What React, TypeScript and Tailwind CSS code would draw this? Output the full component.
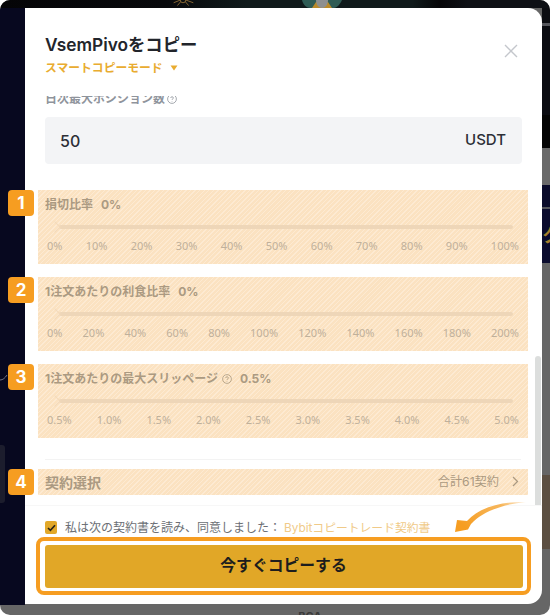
import React from "react";

const FONT = "[font-family:Inter,'Noto_Sans_CJK_JP',sans-serif]";

function Ticks({ items }: { items: string[] }) {
  return (
    <div className="mt-[10px] flex justify-between pl-[9px] pr-[9px] text-[11px] leading-[14px] text-[#bfb09b] [font-family:'Noto_Sans','Noto_Sans_CJK_JP',sans-serif]">
      {items.map((t) => (
        <span key={t}>{t}</span>
      ))}
    </div>
  );
}

function Help({ color }: { color: string }) {
  return (
    <svg width="10" height="10" viewBox="0 0 10 10" fill="none" stroke={color} strokeWidth="0.8">
      <circle cx="5" cy="5" r="4.4" />
      <path d="M3.7 4c0-1.7 2.7-1.7 2.7 0 0 .9-1.4 1-1.4 1.9M5 7.1v.5" />
    </svg>
  );
}

function Badge({ n }: { n: number }) {
  return (
    <div className="absolute left-[-30px] top-0 flex h-[26px] w-[26px] items-center justify-center rounded-[4px] bg-[#f69d21] text-[17px] font-bold leading-none text-white">
      {n}
    </div>
  );
}

const HATCH =
  "bg-[repeating-linear-gradient(135deg,#fbe2c1_0px,#fbe2c1_2.2px,#fdead2_2.2px,#fdead2_3.2px)]";

function Section({
  n,
  title,
  value,
  help,
  ticks,
}: {
  n: number;
  title: string;
  value: string;
  help?: boolean;
  ticks: string[];
}) {
  return (
    <div className={`relative ml-[13px] h-[74px] w-[490px] ${HATCH}`}>
      <Badge n={n} />
      <div className="flex items-center pl-[7px] pt-[7px] text-[12px] font-bold leading-[16px] text-[#ab9a82]">
        <span>{title}</span>
        {help && (
          <span className="ml-[4px] flex">
            <Help color="#ab9a82" />
          </span>
        )}
        <span className="ml-[8px]">{value}</span>
      </div>
      <div className="relative ml-[21px] mr-[15px] mt-[12px] h-[4px] rounded-full bg-[#eed6b8]">
        <div className="absolute left-[-8px] top-[-2px] h-[8px] w-[8px] rotate-45 border-r border-t border-[#f3d9ba]" />
      </div>
      <Ticks items={ticks} />
    </div>
  );
}

export default function App() {
  return (
    <div className={`relative h-[615px] w-[550px] overflow-hidden bg-white ${FONT}`}>
      {/* Dimmed page behind the dialog */}
      <div className="flex h-full flex-col overflow-hidden rounded-[10px] bg-[#666666]">
        <div className="relative h-[8px] shrink-0 bg-[linear-gradient(90deg,#050507_0%,#08090c_30%,#101a1b_45%,#101a1b_75%,#060608_80%,#0e1015_85%)]">
          <svg className="absolute left-[168px] top-[-9px]" width="30" height="16" viewBox="0 0 32 16" fill="none" stroke="#8a6a35" strokeWidth="1">
            <path d="M16 8 4 3M16 8 6 12M16 8 28 3M16 8 27 12M16 8 10 15M16 8 22 15" />
            <circle cx="16" cy="9" r="3" fill="#0b0f10" />
          </svg>
          <svg className="absolute left-[300px] top-0" width="44" height="8" viewBox="0 0 44 8">
            <path d="M2 0h40c-2 5-6 8-8 8H10C7 8 3 5 2 0z" fill="#2f5c55" />
            <path d="M12 8l4-6 6-2 6 2 4 6z" fill="#b98a2a" />
            <path d="M16 0h12c0 5-3 8-6 8s-6-3-6-8z" fill="#8d8f90" />
          </svg>
        </div>
        <div className="flex h-[597px] shrink-0 justify-between">
          <div className="relative w-[25px] bg-[#07081f]">
            <div className="absolute left-0 top-[437px] h-[58px] w-[5px] rounded-r-[3px] bg-[#1c1d2d]" />
            <svg className="absolute left-0 top-[364px]" width="9" height="10" viewBox="0 0 9 10" fill="none" stroke="#8d8e9c" strokeWidth="0.8">
              <path d="M0 8c3 0 5-2 7-5" />
            </svg>
          </div>
          <div className="flex w-[8px] flex-col">
            <div className="h-[15px] bg-[#0c0d12]" />
            <div className="h-[3px] bg-[#55565c]" />
            <div className="h-[89px] bg-[#0b0c12]" />
            <div className="h-[33px] bg-[#050505]" />
            <div className="h-[37px] bg-[#6a6a6a]" />
            <div className="h-[22px] bg-[#0a0b2a]" />
            <div className="h-[2px] bg-[#55565c]" />
            <div className="flex h-[54px] items-center overflow-hidden bg-[#0b0c2e] font-bold leading-none text-[#a5802c]">
              <span className="text-[18px]">ク</span>
            </div>
            <div className="h-[212px] bg-[#666666]" />
            <div className="h-[74px] bg-[#5c4f42]" />
            <div className="grow bg-[#666666]" />
          </div>
        </div>
        <div className="flex grow justify-center gap-[6px] overflow-hidden pl-[70px] text-[11px] font-bold leading-[22px] text-[#3a3a3a]">
          <span>BCA</span>
        </div>
      </div>

      {/* Dialog */}
      <div className="absolute left-[25px] top-[8px] flex h-[596px] w-[517px] flex-col rounded-r-[14px] bg-white">
        <header className="relative h-[88px] shrink-0 pl-[20px] pt-[26px]">
          <h1 className="text-[17.3px] font-semibold leading-[22px] text-[#22252b]">VsemPivoをコピー</h1>
          <div className="mt-[4px] flex items-center text-[11.8px] font-bold leading-[16px] text-[#e9ac30]">
            <span>スマートコピーモード</span>
            <svg className="ml-[7px]" width="8" height="6" viewBox="0 0 8 6" fill="#e9ac30">
              <path d="M0.5 0.5h7L4 5.5z" />
            </svg>
          </div>
          <svg className="absolute left-[479px] top-[36px]" width="14" height="14" viewBox="0 0 14 14" fill="none" stroke="#c4c7cc" strokeWidth="1.4">
            <path d="M1 1l12 12M13 1 1 13" />
          </svg>
        </header>

        <div className="relative h-[409px] shrink-0">
          <div className="flex h-[10px] items-end overflow-hidden pl-[20px]">
            <div className="flex shrink-0 translate-y-[1px] items-center text-[12px] font-semibold leading-[16px] text-[#8f949c]">
              <span>日次最大ポジション数</span>
              <span className="ml-[2px] flex">
                <Help color="#8f949c" />
              </span>
            </div>
          </div>
          <div className="ml-[20px] mt-[11px] flex h-[47px] w-[477px] items-center justify-between rounded-[4px] bg-[#f3f4f6] pl-[15px] pr-[16px] text-[16px] font-medium text-[#2c2f36]">
            <span>50</span>
            <span className="text-[15px]">USDT</span>
          </div>

          <div className="mt-[26px]">
            <Section
              n={1}
              title="損切比率"
              value="0%"
              ticks={["0%", "10%", "20%", "30%", "40%", "50%", "60%", "70%", "80%", "90%", "100%"]}
            />
          </div>
          <div className="mt-[13px]">
            <Section
              n={2}
              title="1注文あたりの利食比率"
              value="0%"
              ticks={["0%", "20%", "40%", "60%", "80%", "100%", "120%", "140%", "160%", "180%", "200%"]}
            />
          </div>
          <div className="mt-[13px]">
            <Section
              n={3}
              title="1注文あたりの最大スリッページ"
              value="0.5%"
              help
              ticks={["0.5%", "1.0%", "1.5%", "2.0%", "2.5%", "3.0%", "3.5%", "4.0%", "4.5%", "5.0%"]}
            />
          </div>

          <div className="ml-[20px] mt-[21px] h-px w-[476px] bg-[#f3f3f3]" />

          <div className={`relative ml-[13px] mt-[9px] flex h-[26px] w-[490px] items-center justify-between pl-[7px] pr-[9px] ${HATCH}`}>
            <Badge n={4} />
            <span className="text-[14px] font-bold text-[#ab9a82]">契約選択</span>
            <span className="flex items-center text-[12.2px] text-[#ab9a82]">
              合計61契約
              <svg className="ml-[13px]" width="7" height="11" viewBox="0 0 7 11" fill="none" stroke="#ab9a82" strokeWidth="1.3">
                <path d="M1 1l4.5 4.5L1 10" />
              </svg>
            </span>
          </div>

          <div className="absolute left-[510px] top-[260px] h-[149px] w-[6px] rounded-t-[3px] bg-[#dcdedd]" />
        </div>

        <footer className="relative grow border-t border-[#f7f7f7] pl-[20px]">
          <div className="mt-[15px] flex h-[13px] items-center text-[12px] leading-[16px] text-[#6c6f75]">
            <span className="flex h-[13px] w-[12px] items-center justify-center rounded-[2px] bg-[#e2a829]">
              <svg width="9" height="8" viewBox="0 0 9 8" fill="none" stroke="#2a2416" strokeWidth="1.6">
                <path d="M1 4l2.4 2.4L8 1.2" />
              </svg>
            </span>
            <span className="ml-[8px]">私は次の契約書を読み、同意しました：</span>
            <span className="ml-[3px] text-[11.8px] text-[#f0ca88]">Bybitコピートレード契約書</span>
          </div>
          <div className="ml-[-9px] mt-[3px] h-[58px] w-[495px] rounded-[8px] border-[4.5px] border-[#f69d21] px-[4.5px] py-[3.5px]">
            <button className="flex h-full w-full items-center justify-center rounded-[3px] bg-[#e1a727] text-[15.8px] font-bold text-[#1d1d1d]">
              今すぐコピーする
            </button>
          </div>
        </footer>
      </div>

      {/* Annotation arrow */}
      <svg className="absolute left-[450px] top-[498px]" width="82" height="38" viewBox="0 0 82 38">
        <defs>
          <linearGradient id="fade" x1="1" y1="0" x2="0" y2="0.6">
            <stop offset="0" stopColor="#f69d21" stopOpacity="0.1" />
            <stop offset="0.3" stopColor="#f5a534" stopOpacity="0.8" />
            <stop offset="1" stopColor="#f69d21" />
          </linearGradient>
        </defs>
        <path
          d="M76 4C52 3 30 9 17 23L7 22 5 34 18 31.5 21 26C33 13 54 6 76 4z"
          fill="url(#fade)"
        />
      </svg>
    </div>
  );
}
